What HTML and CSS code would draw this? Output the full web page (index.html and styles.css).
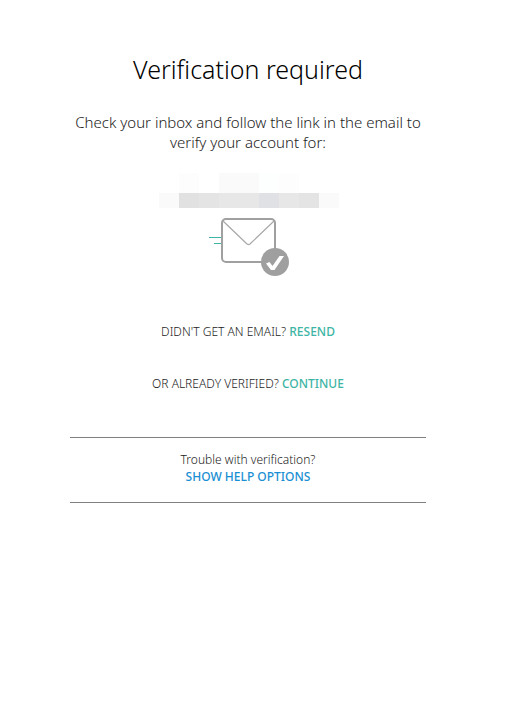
FILE: index.html
```html
<!DOCTYPE html>
<html lang="en">
<head>
  <meta charset="UTF-8" />
  <meta name="viewport" content="width=device-width, initial-scale=1.0" />
  <title>Verification required</title>
  <link rel="stylesheet" href="styles.css">
</head>
<body>
  <main class="verify">
    <h1>Verification required</h1>
    <p class="intro">Check your inbox and follow the link in the email to verify your account for:</p>

    <div class="masked-email" role="img" aria-label="Hidden email address">
      <span></span><span class="faint"></span><span></span><span class="light"></span><span class="light"></span><span class="mint"></span><span class="faint"></span><span></span><span></span>
      <span class="light"></span><span class="dark"></span><span class="mid"></span><span class="grey"></span><span class="grey"></span><span class="blue"></span><span class="grey"></span><span class="mid"></span><span class="light"></span>
    </div>

    <svg class="mail-icon" viewBox="0 0 80 60" width="80" height="60" aria-hidden="true">
      <path d="M1 20.5h12M6 26.5h7" stroke="#3db5a5" fill="none" />
      <rect x="14" y="2" width="53" height="43" rx="4" fill="#fff" stroke="#a0a0a0" stroke-width="2" />
      <path d="M15 4l24 23q1.5 1.2 3 0L66 4" fill="none" stroke="#a8a8a8" stroke-width="1.2" />
      <circle cx="67" cy="45" r="14" fill="#9f9f9f" />
      <path d="M58 46.5l3.500-1.500 3 4 7-10h4.500l-9.500 14h-3.500z" fill="#fff" />
    </svg>

    <p class="action">DIDN'T GET AN EMAIL? <a href="#resend">RESEND</a></p>
    <p class="action">OR ALREADY VERIFIED? <a href="#continue">CONTINUE</a></p>

    <section class="help">
      <p>Trouble with verification?</p>
      <a href="#help">SHOW HELP OPTIONS</a>
    </section>
  </main>
</body>
</html>
```

FILE: styles.css
```css
body {
  margin: 0;
  background: #fff;
  color: #222;
  font-family: "Noto Sans", "Open Sans", sans-serif;
  font-size: 12px;
  font-weight: 300;
}
.verify {
  display: flex;
  flex-direction: column;
  align-items: center;
  max-width: 356px;
  margin: 0 auto;
  padding: 51px 34px 0 0;
  text-align: center;
}
h1 {
  margin: 0;
  color: #000;
  font-size: 25px;
  font-weight: 300;
  line-height: 36px;
}
p {
  margin: 0;
}
a {
  color: #3db5a5;
  font-weight: 500;
  text-decoration: none;
}
.intro {
  margin-top: 25px;
  font-size: 15px;
  line-height: 20px;
}
.masked-email {
  display: grid;
  grid-template-columns: repeat(9, 20px);
  grid-template-rows: 20px 15px;
  margin: 21px 0 0 2px;
}
.faint {
  background: #fdfdfd;
}
.light {
  background: #fafafa;
}
.mint {
  background: #fcfffe;
}
.dark {
  background: #e1e1e1;
}
.mid {
  background: #e4e4e4;
}
.grey {
  background: #e7e7e7;
}
.blue {
  background: #dfe1e4;
}
.mail-icon {
  margin: 9px 0 45px;
  overflow: visible;
}
.action {
  margin-bottom: 32px;
  line-height: 20px;
}
.help {
  align-self: stretch;
  margin-top: 11px;
  padding: 13px 0 17px;
  border-top: 1px solid #808080;
  border-bottom: 1px solid #808080;
  line-height: 17px;
}
.help a {
  color: #1a8fd3;
}
```
